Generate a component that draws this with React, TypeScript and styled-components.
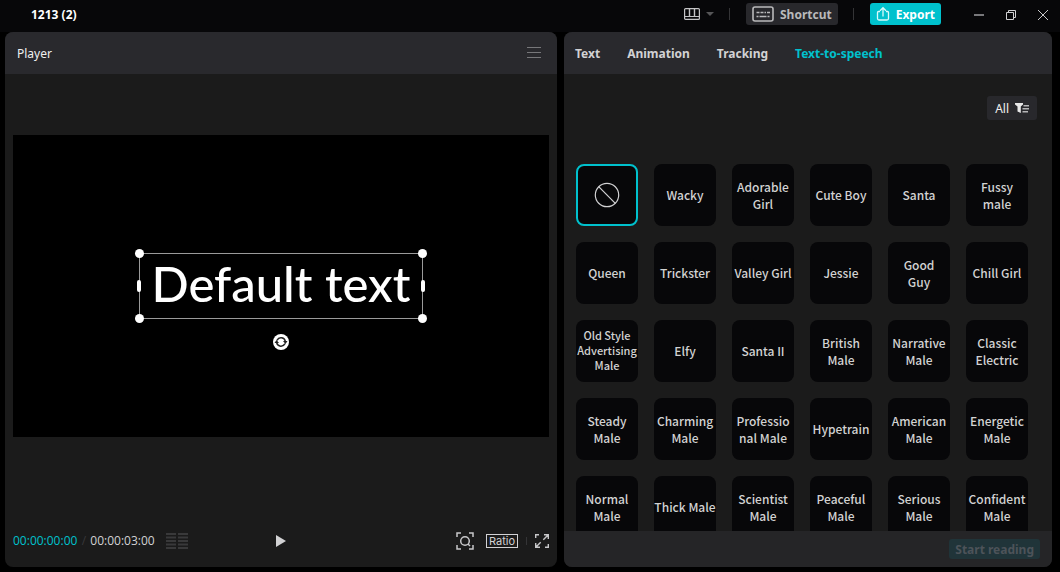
import React, { useState } from "react";
import styled, { createGlobalStyle, css } from "styled-components";

const GlobalStyle = createGlobalStyle`
  *, *::before, *::after { box-sizing: border-box; }
  body {
    margin: 0;
    background: #000;
    color: #d2d2d4;
    font: 12px/16px "Noto Sans", "Open Sans", sans-serif;
  }
  button { font: inherit; color: inherit; border: 0; padding: 0; background: none; cursor: pointer; }
  h1, h2 { margin: 0; font-size: inherit; }
  svg { display: block; }
`;

const Window = styled.div`
  display: flex;
  flex-direction: column;
  height: 100vh;
`;

const TitleBar = styled.header`
  display: flex;
  align-items: center;
  justify-content: space-between;
  flex: none;
  height: 32px;
  padding: 0 9px 4px 31px;
  background: #070709;
`;

const ProjectName = styled.h1`
  padding-top: 2px;
  color: #fff;
  font-weight: 700;
`;

const TitleTools = styled.div`
  display: flex;
  align-items: center;
`;

const Divider = styled.span<{ $tall?: boolean }>`
  width: 1px;
  height: ${(p) => (p.$tall ? 12 : 8)}px;
  margin: ${(p) => (p.$tall ? "0 16px 0 15px" : "0 8px")};
  background: #343436;
`;

const LayoutButton = styled.button`
  display: flex;
  align-items: center;
  gap: 6px;
  height: 22px;
`;

const TitleButton = styled.button<{ $primary?: boolean }>`
  display: flex;
  align-items: center;
  gap: 6px;
  height: 22px;
  padding: 0 6px;
  border-radius: 3px;
  font-weight: 700;
  background: ${(p) => (p.$primary ? "#00c1cd" : "#28282c")};
  color: ${(p) => (p.$primary ? "#fff" : "#b9b9bb")};
`;

const ButtonLabel = styled.span`
  padding-top: 2px;
`;

const WindowButtons = styled.div`
  display: flex;
  gap: 16px;
  margin-left: 30px;
`;

const WindowButton = styled.button`
  width: 16px;
  height: 16px;
`;

const Workspace = styled.main`
  display: grid;
  grid-template-columns: 552fr 488fr;
  gap: 7px;
  flex: 1;
  min-height: 0;
  padding: 0 8px 5px 5px;
`;

const Panel = styled.section`
  display: flex;
  flex-direction: column;
  min-width: 0;
  min-height: 0;
  overflow: hidden;
  border-radius: 8px;
  background: #1b1b1b;
`;

const PanelHeader = styled.div`
  display: flex;
  align-items: center;
  justify-content: space-between;
  flex: none;
  height: 42px;
  padding: 0 12px 0 11px;
  background: #29292d;
`;

const PanelTitle = styled.h2`
  padding: 2px 0 0 1px;
  color: #f0f0f0;
  font-weight: 400;
`;

const StageArea = styled.div`
  display: flex;
  align-items: center;
  flex: 1;
  min-height: 0;
  padding: 0 8px;
`;

const Stage = styled.div`
  display: flex;
  align-items: center;
  justify-content: center;
  width: 100%;
  aspect-ratio: 16 / 9;
  background: #000;
`;

const Selection = styled.div`
  position: relative;
  display: flex;
  align-items: center;
  justify-content: center;
  height: 66px;
  padding: 0 11px 6px;
  border: 1px solid #9a9a9a;
  color: #fff;
  font: 500 49px/58px Lato, sans-serif;
  white-space: nowrap;
`;

const Corner = styled.span<{ $v: "top" | "bottom"; $h: "left" | "right" }>`
  position: absolute;
  ${(p) => p.$v}: -5px;
  ${(p) => p.$h}: -5px;
  width: 9px;
  height: 9px;
  border-radius: 50%;
  background: #fff;
`;

const SideGrip = styled.span<{ $h: "left" | "right" }>`
  position: absolute;
  top: 26px;
  ${(p) => p.$h}: -3px;
  width: 4px;
  height: 12px;
  border-radius: 2px;
  background: #fff;
`;

const RotateGrip = styled.button`
  position: absolute;
  top: 80px;
  left: calc(50% - 8px);
  width: 16px;
  height: 16px;
`;

const Transport = styled.div`
  display: grid;
  grid-template-columns: 1fr auto 1fr;
  align-items: center;
  flex: none;
  height: 69px;
  padding: 31px 8px 14px;
`;

const Timing = styled.div`
  display: flex;
  align-items: center;
  font-family: "Open Sans", "Noto Sans", sans-serif;
`;

const Current = styled.span`
  color: #00c1cd;
`;

const Slash = styled.span`
  width: 13px;
  text-align: center;
  color: #38383a;
`;

const Meter = styled.span`
  display: block;
  margin-left: 11px;
`;

const IconButton = styled.button`
  display: grid;
  place-items: center;
`;

const ViewTools = styled.div`
  display: flex;
  align-items: center;
  justify-content: flex-end;
`;

const RatioButton = styled.button`
  height: 14px;
  margin-left: 12px;
  padding: 0 2px;
  border: 1px solid #d2d2d4;
  font: 11px/12px Inter, sans-serif;
`;

const Tabs = styled.nav`
  display: flex;
  gap: 27px;
`;

const Tab = styled.button<{ $active: boolean }>`
  padding-top: 2px;
  font-weight: 700;
  color: ${(p) => (p.$active ? "#00c1cd" : "#d2d2d4")};
`;

const FilterRow = styled.div`
  display: flex;
  justify-content: flex-end;
  flex: none;
  padding: 22px 15px 44px;
`;

const FilterButton = styled.button`
  display: flex;
  align-items: center;
  gap: 6px;
  height: 24px;
  padding: 0 8px;
  border-radius: 3px;
  background: #28282c;
  color: #f0f0f0;
`;

const VoiceGrid = styled.div`
  display: grid;
  grid-template-columns: repeat(auto-fill, 62px);
  grid-auto-rows: 62px;
  gap: 16px;
  flex: 1;
  min-height: 0;
  padding: 0 12px;
  overflow-y: auto;
  scrollbar-width: none;
`;

const VoiceCard = styled.button<{ $selected?: boolean; $small?: boolean }>`
  display: grid;
  place-items: center;
  border-radius: 8px;
  background: #070709;
  color: #d2d2d2;
  text-align: center;
  white-space: pre-line;
  font: 500 12px/17px "Noto Sans CJK SC", sans-serif;
  ${(p) =>
    p.$small &&
    css`
      font-size: 11px;
      line-height: 15px;
    `}
  ${(p) => p.$selected && css`border: 2px solid #00c1cd;`}
`;

const VoiceName = styled.span`
  padding-bottom: 1px;
`;

const PanelFooter = styled.div`
  display: flex;
  align-items: center;
  justify-content: flex-end;
  flex: none;
  height: 36px;
  padding: 0 12px;
  background: #252527;
`;

const StartButton = styled.button`
  height: 20px;
  padding: 2px 6px 0;
  border-radius: 3px;
  background: #203439;
  color: #4d5359;
  font-weight: 700;
`;

const tabs = ["Text", "Animation", "Tracking", "Text-to-speech"];

const voices = [
  "Wacky", "Adorable Girl", "Cute Boy", "Santa", "Fussy\nmale",
  "Queen", "Trickster", "Valley Girl", "Jessie", "Good\nGuy", "Chill Girl",
  "Old Style Advertising Male", "Elfy", "Santa II", "British Male", "Narrative Male", "Classic Electric",
  "Steady Male", "Charming Male", "Professio\nnal Male", "Hypetrain", "American Male", "Energetic Male",
  "Normal Male", "Thick Male", "Scientist Male", "Peaceful Male", "Serious Male", "Confident Male",
];

const LayoutIcon = () => (
  <svg width="16" height="12" viewBox="0 0 16 12" fill="none" stroke="#c4c4c6">
    <rect x=".6" y=".6" width="14.800" height="10.800" rx="1" strokeWidth="1.200" />
    <path d="M.5 8.500h15" />
    <path d="M5.500.5v8M10.500.5v8" strokeWidth="1.400" />
  </svg>
);

const KeyboardIcon = () => (
  <svg width="22" height="16" viewBox="0 0 22 16" fill="none" stroke="#b9b9bb">
    <rect x="1" y="1" width="20" height="14" rx="2" strokeWidth="1.600" />
    <path d="M4.500 6.500h3M8.500 6.500h3M12.500 6.500h1.500M15 6.500h3M4.500 10.500h2M7.500 10.500h7M15.500 10.500h2" strokeWidth="1.600" />
  </svg>
);

const ExportIcon = () => (
  <svg width="14" height="16" viewBox="0 0 14 16" fill="none" stroke="#d9fafa" strokeWidth="1.300">
    <path d="M4 5.500H2.500Q1.500 5.500 1.500 6.500v6q0 1.500 1.500 1.500h8q1.500 0 1.500-1.500v-6q0-1-1-1H10" />
    <path d="M7 10.500V2M4 4.700 7 1.700l3 3" />
  </svg>
);

const FilterIcon = () => (
  <svg width="14" height="12" viewBox="0 0 14 12">
    <path d="M0 1h8v1.500L5.800 4.500v6.500L2.500 9.500v-5L0 2.500z" fill="#e8e8e8" />
    <path d="M8.500 3.800H14M7.500 6.800H14M7.500 9.800H13" stroke="#b5b5b7" strokeWidth="1.500" />
  </svg>
);

const MeterIcon = () => (
  <svg width="22" height="16" viewBox="0 0 22 16" stroke="#39393a" strokeWidth="2">
    <path d="M0 1h10M12 1h10M0 4.500h10M12 4.500h10M0 8h10M12 8h10M0 11.500h10M12 11.500h10M0 15h10M12 15h10" />
  </svg>
);

const ZoomFitIcon = () => (
  <svg width="18" height="18" viewBox="0 0 18 18" fill="none" stroke="#c8c8ca" strokeWidth="1.500">
    <path d="M1 5V1h4M13 1h4v4M17 13v4h-4M5 17H1v-4" />
    <circle cx="9" cy="9" r="4.300" />
    <path d="m12 12 2 2" />
  </svg>
);

const FullscreenIcon = () => (
  <svg width="14" height="14" viewBox="0 0 14 14" fill="none" stroke="#c8c8ca" strokeWidth="1.400">
    <path d="M9 .7h4.300V5M13 1 8.300 5.700M5 13.300H.7V9M1 13l4.700-4.700M.7 4V.7H4M13.300 10v3.300H10" />
  </svg>
);

const RotateIcon = () => (
  <svg width="16" height="16" viewBox="0 0 16 16" fill="none">
    <circle cx="8" cy="8" r="8" fill="#fff" />
    <path d="M4 6.300A4.500 4.500 0 0 1 12.300 7M12 9.700A4.500 4.500 0 0 1 3.700 9" stroke="#222" strokeWidth="1.500" />
    <path d="M10 7h4.500L12.500 9.900zM1.500 9H6L3.500 6.100z" fill="#222" />
  </svg>
);

export default function App() {
  const [tab, setTab] = useState("Text-to-speech");
  const [voice, setVoice] = useState("");

  return (
    <>
      <GlobalStyle />
      <Window>
        <TitleBar>
          <ProjectName>1213 (2)</ProjectName>
          <TitleTools>
            <LayoutButton aria-label="Layout">
              <LayoutIcon />
              <svg width="8" height="4" viewBox="0 0 8 4"><path d="M0 0h8L4 4z" fill="#555557" /></svg>
            </LayoutButton>
            <Divider $tall />
            <TitleButton><KeyboardIcon /><ButtonLabel>Shortcut</ButtonLabel></TitleButton>
            <Divider $tall />
            <TitleButton $primary><ExportIcon /><ButtonLabel>Export</ButtonLabel></TitleButton>
            <WindowButtons>
              <WindowButton aria-label="Minimize">
                <svg width="16" height="16"><path d="M3 9h10" stroke="#77777a" strokeWidth="2" /></svg>
              </WindowButton>
              <WindowButton aria-label="Restore">
                <svg width="16" height="16" fill="none" stroke="#d0d0d2">
                  <path d="M3.500 6.500h7v7h-7zM5.500 6.500v-2h7v7h-2" />
                </svg>
              </WindowButton>
              <WindowButton aria-label="Close">
                <svg width="16" height="16" stroke="#c8c8ca"><path d="m3 4 10 10M13 4 3 14" /></svg>
              </WindowButton>
            </WindowButtons>
          </TitleTools>
        </TitleBar>
        <Workspace>
          <Panel>
            <PanelHeader>
              <PanelTitle>Player</PanelTitle>
              <IconButton aria-label="Player menu">
                <svg width="22" height="12" viewBox="0 0 22 12" stroke="#77777a">
                  <path d="M4 .5h14M4 5.500h14M4 10.500h14" />
                </svg>
              </IconButton>
            </PanelHeader>
            <StageArea>
              <Stage>
                <Selection>
                  Default text
                  <Corner $v="top" $h="left" />
                  <Corner $v="top" $h="right" />
                  <Corner $v="bottom" $h="left" />
                  <Corner $v="bottom" $h="right" />
                  <SideGrip $h="left" />
                  <SideGrip $h="right" />
                  <RotateGrip aria-label="Rotate"><RotateIcon /></RotateGrip>
                </Selection>
              </Stage>
            </StageArea>
            <Transport>
              <Timing>
                <Current>00:00:00:00</Current>
                <Slash>/</Slash>
                <span>00:00:03:00</span>
                <Meter><MeterIcon /></Meter>
              </Timing>
              <IconButton aria-label="Play">
                <svg width="10" height="12" viewBox="0 0 10 12"><path d="M0 0l10 6-10 6z" fill="#d2d2d4" /></svg>
              </IconButton>
              <ViewTools>
                <IconButton aria-label="Zoom to fit"><ZoomFitIcon /></IconButton>
                <RatioButton>Ratio</RatioButton>
                <Divider />
                <IconButton aria-label="Full screen"><FullscreenIcon /></IconButton>
              </ViewTools>
            </Transport>
          </Panel>
          <Panel>
            <PanelHeader>
              <Tabs>
                {tabs.map((name) => (
                  <Tab key={name} $active={name === tab} onClick={() => setTab(name)}>{name}</Tab>
                ))}
              </Tabs>
            </PanelHeader>
            <FilterRow>
              <FilterButton><ButtonLabel>All</ButtonLabel><FilterIcon /></FilterButton>
            </FilterRow>
            <VoiceGrid>
              <VoiceCard aria-label="No voice" $selected={voice === ""} onClick={() => setVoice("")}>
                <svg width="26" height="26" viewBox="0 0 26 26" fill="none" stroke="#d2d2d4" strokeWidth="1.200">
                  <circle cx="13" cy="13" r="11.700" />
                  <path d="m4.700 4.700 16.600 16.600" />
                </svg>
              </VoiceCard>
              {voices.map((name) => (
                <VoiceCard
                  key={name}
                  $small={name.length > 20}
                  $selected={voice === name}
                  onClick={() => setVoice(name)}
                >
                  <VoiceName>{name}</VoiceName>
                </VoiceCard>
              ))}
            </VoiceGrid>
            <PanelFooter>
              <StartButton disabled>Start reading</StartButton>
            </PanelFooter>
          </Panel>
        </Workspace>
      </Window>
    </>
  );
}
